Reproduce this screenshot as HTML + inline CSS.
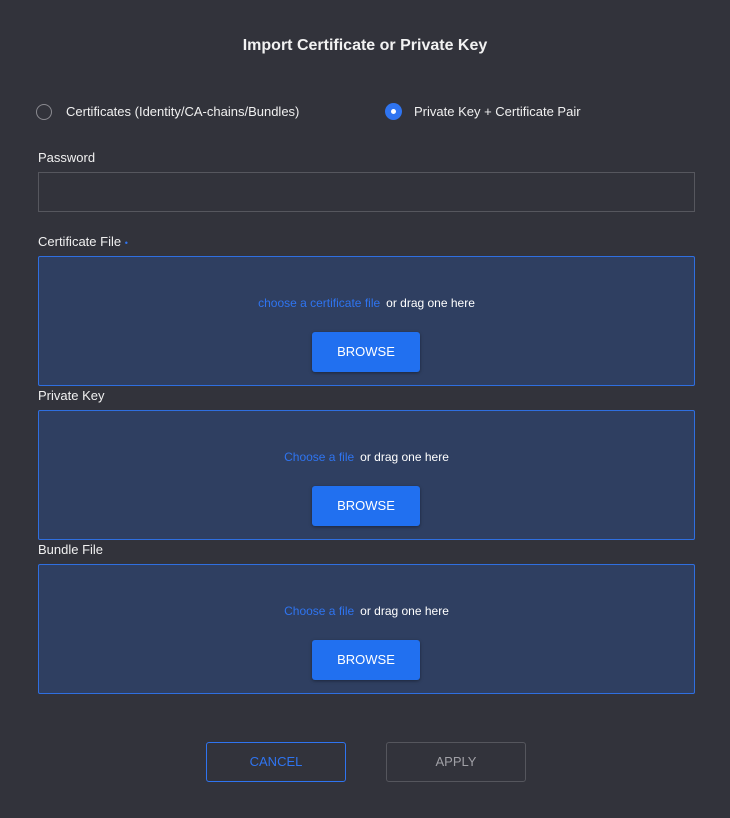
<!DOCTYPE html>
<html><head><style>
body{margin:0;width:730px;height:818px;background:#32333b;font-family:"Liberation Sans",sans-serif;color:#fff;position:relative;overflow:hidden}
.a{position:absolute}
.title{top:37px;left:0;width:730px;text-align:center;font-size:16px;font-weight:bold;color:#f2f2f2}
.radio{width:14px;height:14px;border-radius:50%;border:1.5px solid #8a8a90}
.radio.on{border:none;width:17px;height:17px;background:#2f74f0}
.radio.on:after{content:"";position:absolute;left:6px;top:6px;width:5px;height:5px;border-radius:50%;background:#fff}
.lbl{font-size:13px;color:#f0f0f0}
.input{left:38px;width:655px;top:172px;height:38px;border:1px solid #56575e;background:#32333b}
.zone{left:38px;width:655px;height:128px;border:1px solid #2f6fe0;background:#2f3f61;border-radius:2px}
.msg{position:absolute;top:39px;left:0;width:100%;text-align:center;font-size:12px}
.msg span.l{color:#2f74f0;margin-right:6px}
.browse{position:absolute;left:273px;top:75px;width:108px;height:40px;background:#2170f0;border-radius:3px;color:#fff;font-size:13px;text-align:center;line-height:40px;box-shadow:0 1px 3px rgba(0,0,0,.4)}
.btn{top:742px;width:138px;height:38px;border-radius:3px;text-align:center;line-height:38px;font-size:13px}
</style></head><body>
<div class="a title">Import Certificate or Private Key</div>
<div class="a radio" style="left:36px;top:104px"></div>
<div class="a lbl" style="left:66px;top:104px">Certificates (Identity/CA-chains/Bundles)</div>
<div class="a radio on" style="left:385px;top:103px"></div>
<div class="a lbl" style="left:414px;top:104px">Private Key + Certificate Pair</div>
<div class="a lbl" style="left:38px;top:150px">Password</div>
<div class="a input"></div>
<div class="a lbl" style="left:38px;top:234px">Certificate File <span style="color:#2f74f0;font-size:9px">•</span></div>
<div class="a zone" style="top:256px"><div class="msg"><span class="l">choose a certificate file</span>or drag one here</div><div class="browse">BROWSE</div></div>
<div class="a lbl" style="left:38px;top:388px">Private Key</div>
<div class="a zone" style="top:410px"><div class="msg"><span class="l">Choose a file</span>or drag one here</div><div class="browse">BROWSE</div></div>
<div class="a lbl" style="left:38px;top:542px">Bundle File</div>
<div class="a zone" style="top:564px"><div class="msg"><span class="l">Choose a file</span>or drag one here</div><div class="browse">BROWSE</div></div>
<div class="a btn" style="left:206px;border:1px solid #2f74f0;color:#2f74f0">CANCEL</div>
<div class="a btn" style="left:386px;border:1px solid #55565d;color:#a0a0a6">APPLY</div>
</body></html>
